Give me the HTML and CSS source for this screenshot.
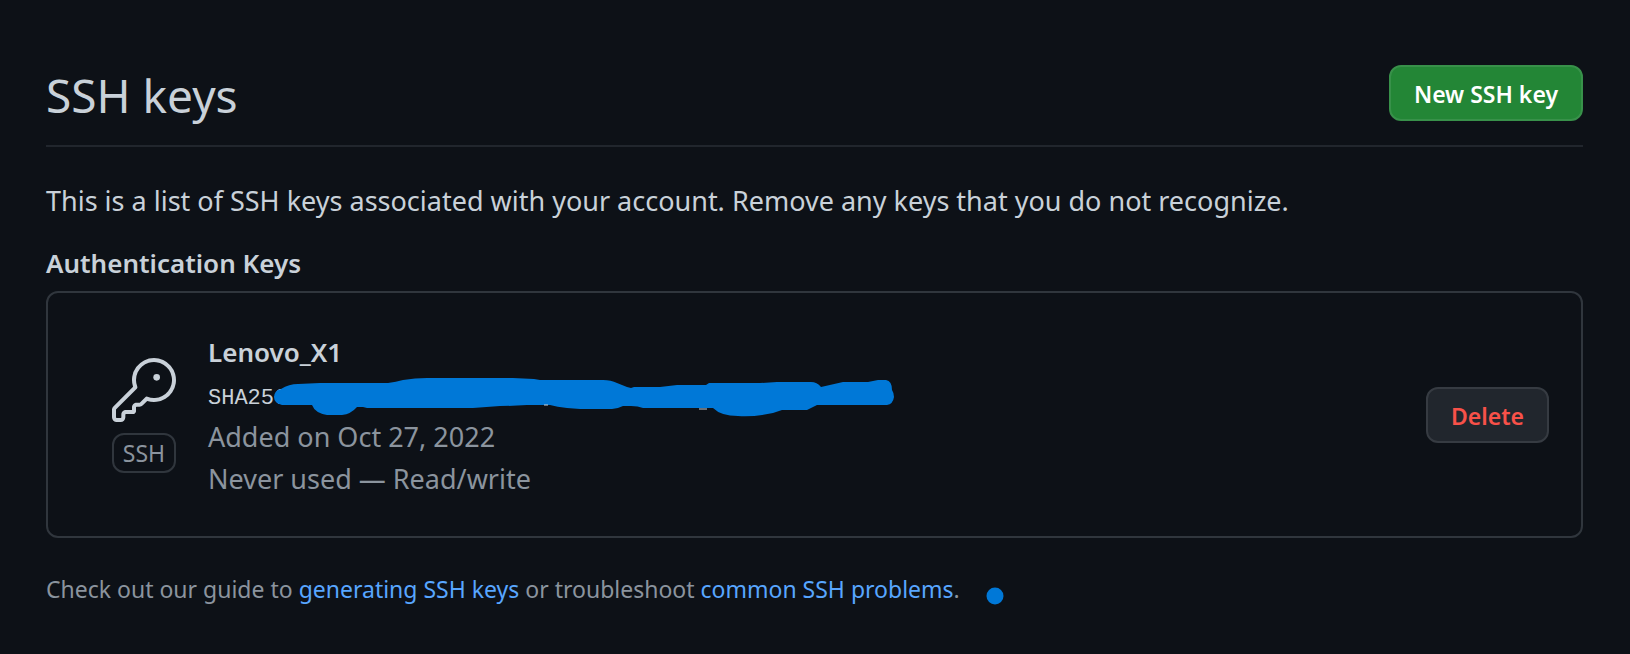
FILE: index.html
```
<!DOCTYPE html>
<html lang="en">
<head>
<meta charset="utf-8">
<title>SSH keys</title>
<link rel="stylesheet" href="styles.css">
</head>
<body>
<main class="page">
  <header class="page-header">
    <h1 class="page-title">SSH keys</h1>
    <button class="btn btn-primary" type="button">New SSH key</button>
  </header>
  <p class="intro">This is a list of SSH keys associated with your account. Remove any keys that you do not recognize.</p>
  <h2 class="list-title">Authentication Keys</h2>
  <ul class="key-list">
    <li class="key-row">
      <div class="key-kind">
        <svg class="key-icon" viewBox="0 0 24 24" aria-hidden="true">
          <path d="M16.75 8.5a1.25 1.25 0 1 0 0-2.5 1.25 1.25 0 0 0 0 2.5Z"/>
          <path d="M15.75 0a8.25 8.25 0 1 1-2.541 16.101l-1.636 1.636a1.744 1.744 0 0 1-1.237.513H9.25a.25.25 0 0 0-.25.25v1.448a.876.876 0 0 1-.256.619l-.214.213a.75.75 0 0 1-.545.22H5.25a.25.25 0 0 0-.25.25v1A1.75 1.75 0 0 1 3.25 24h-1.5A1.75 1.75 0 0 1 0 22.25v-2.836c0-.464.185-.908.513-1.236l7.386-7.388A8.249 8.249 0 0 1 15.75 0ZM9 8.25a6.733 6.733 0 0 0 .463 2.462.75.75 0 0 1-.168.804l-7.722 7.721a.25.25 0 0 0-.073.177v2.836c0 .138.112.25.25.25h1.5a.25.25 0 0 0 .25-.25v-1c0-.966.784-1.75 1.75-1.75H7.5v-1c0-.966.784-1.75 1.75-1.75h1.086a.25.25 0 0 0 .177-.073l1.971-1.972a.75.75 0 0 1 .804-.168A6.75 6.75 0 1 0 9 8.25Z"/>
        </svg>
        <span class="badge">SSH</span>
      </div>
      <div class="key-info">
        <strong class="key-name">Lenovo_X1</strong>
        <div class="fingerprint">
          <code>SHA256</code>
          <svg class="marker" viewBox="270 374 628 48" aria-hidden="true">
            <path class="ink" d="M274 397Q274 391 281 389Q289 384 298 384L320 383H388Q396 382 403 380Q415 378 427 378H513L534 379L540 380H603Q611 380 617 383L627 387L631 388L634 387H660L677 385H706L709 383H760L777 382H811Q817 382 821 387L843 382H868L878 380H886Q892 381 892 390Q894 393 894 397Q893 404 887 405H817L807 410H782L773 413Q755 417 738 416Q721 416 713 408H643Q638 406 631 406H623Q617 409 612 409H580L567 408Q557 407 550 405L527 405Q512 406 500 406L473 408H367L363 407H357Q351 414 342 415H327Q315 413 312 405H282Q274 403 274 397Z"/>
            <path class="peek" d="M544 405h4M699 409h8"/>
          </svg>
        </div>
        <span class="meta">Added on Oct 27, 2022</span>
        <span class="meta">Never used — Read/write</span>
      </div>
      <button class="btn btn-danger" type="button">Delete</button>
    </li>
  </ul>
  <footer class="help">
    <p class="help-text">Check out our guide to <a href="#generating">generating SSH keys</a> or troubleshoot <a href="#problems">common SSH problems</a>.</p>
    <svg class="dot" viewBox="0 0 18 18" aria-hidden="true"><circle cx="9" cy="9" r="8.5"/></svg>
  </footer>
</main>
</body>
</html>
```
FILE: styles.css
```
* { box-sizing: border-box; }

body {
  margin: 0;
  background: #0d1117;
  color: #c9d1d9;
  font-family: "Segoe UI", "Noto Sans", sans-serif;
  font-size: 27px;
  line-height: 42px;
}

.page { padding: 64px 47px 0 46px; }

.page-header {
  display: flex;
  justify-content: space-between;
  align-items: flex-start;
  padding-bottom: 19px;
  border-bottom: 2px solid #21262d;
}

.page-title {
  margin: 0;
  font-size: 46px;
  font-weight: 400;
  line-height: 62px;
}

.btn {
  height: 56px;
  padding: 2px 23px 0;
  border: 2px solid #363b42;
  border-radius: 12px;
  background: #21262d;
  font-family: inherit;
  font-size: 23px;
  font-weight: 600;
  line-height: 40px;
  white-space: nowrap;
}

.btn-primary {
  margin-top: 1px;
  border-color: #38914a;
  background: #238636;
  color: #fff;
}

.btn-danger { margin-left: auto; color: #f85149; }

.intro { margin: 33px 0 20px; }

.list-title {
  margin: 0;
  font-size: 26px;
  font-weight: 600;
  line-height: 42px;
}

.key-list {
  margin: 7px 0 0;
  padding: 0;
  border: 2px solid #30363d;
  border-radius: 12px;
  list-style: none;
}

.key-row {
  display: flex;
  align-items: center;
  padding: 37px 32px 36px;
}

.key-kind {
  display: flex;
  flex-direction: column;
  align-items: center;
  gap: 11px;
  margin: 0 32px;
}

.key-icon { width: 64px; height: 64px; fill: #c9d1d9; }

.badge {
  width: 64px;
  border: 2px solid #30363d;
  border-radius: 12px;
  color: #8b949e;
  font-size: 23px;
  line-height: 36px;
  text-align: center;
}

.key-info { display: flex; flex-direction: column; }

.key-name { font-size: 26px; font-weight: 600; line-height: 44px; }

.fingerprint { position: relative; }

.fingerprint code {
  display: block;
  padding-top: 8px;
  font-family: Consolas, "Liberation Mono", monospace;
  font-size: 22px;
  line-height: 34px;
}

.marker {
  position: absolute;
  top: 0;
  left: 62px;
  width: 628px;
  height: 48px;
}

.ink { fill: #0078d7; }

.peek { fill: none; stroke: #c9d1d9; stroke-width: 1; }

.meta { color: #8b949e; }

.help {
  display: flex;
  align-items: center;
  gap: 26px;
  margin-top: 30px;
  color: #8b949e;
  font-size: 23px;
}

.help-text { margin: 0; }

.help a { color: #58a6ff; text-decoration: none; }

.dot { width: 18px; height: 18px; margin-top: 14px; fill: #0078d7; }
```
